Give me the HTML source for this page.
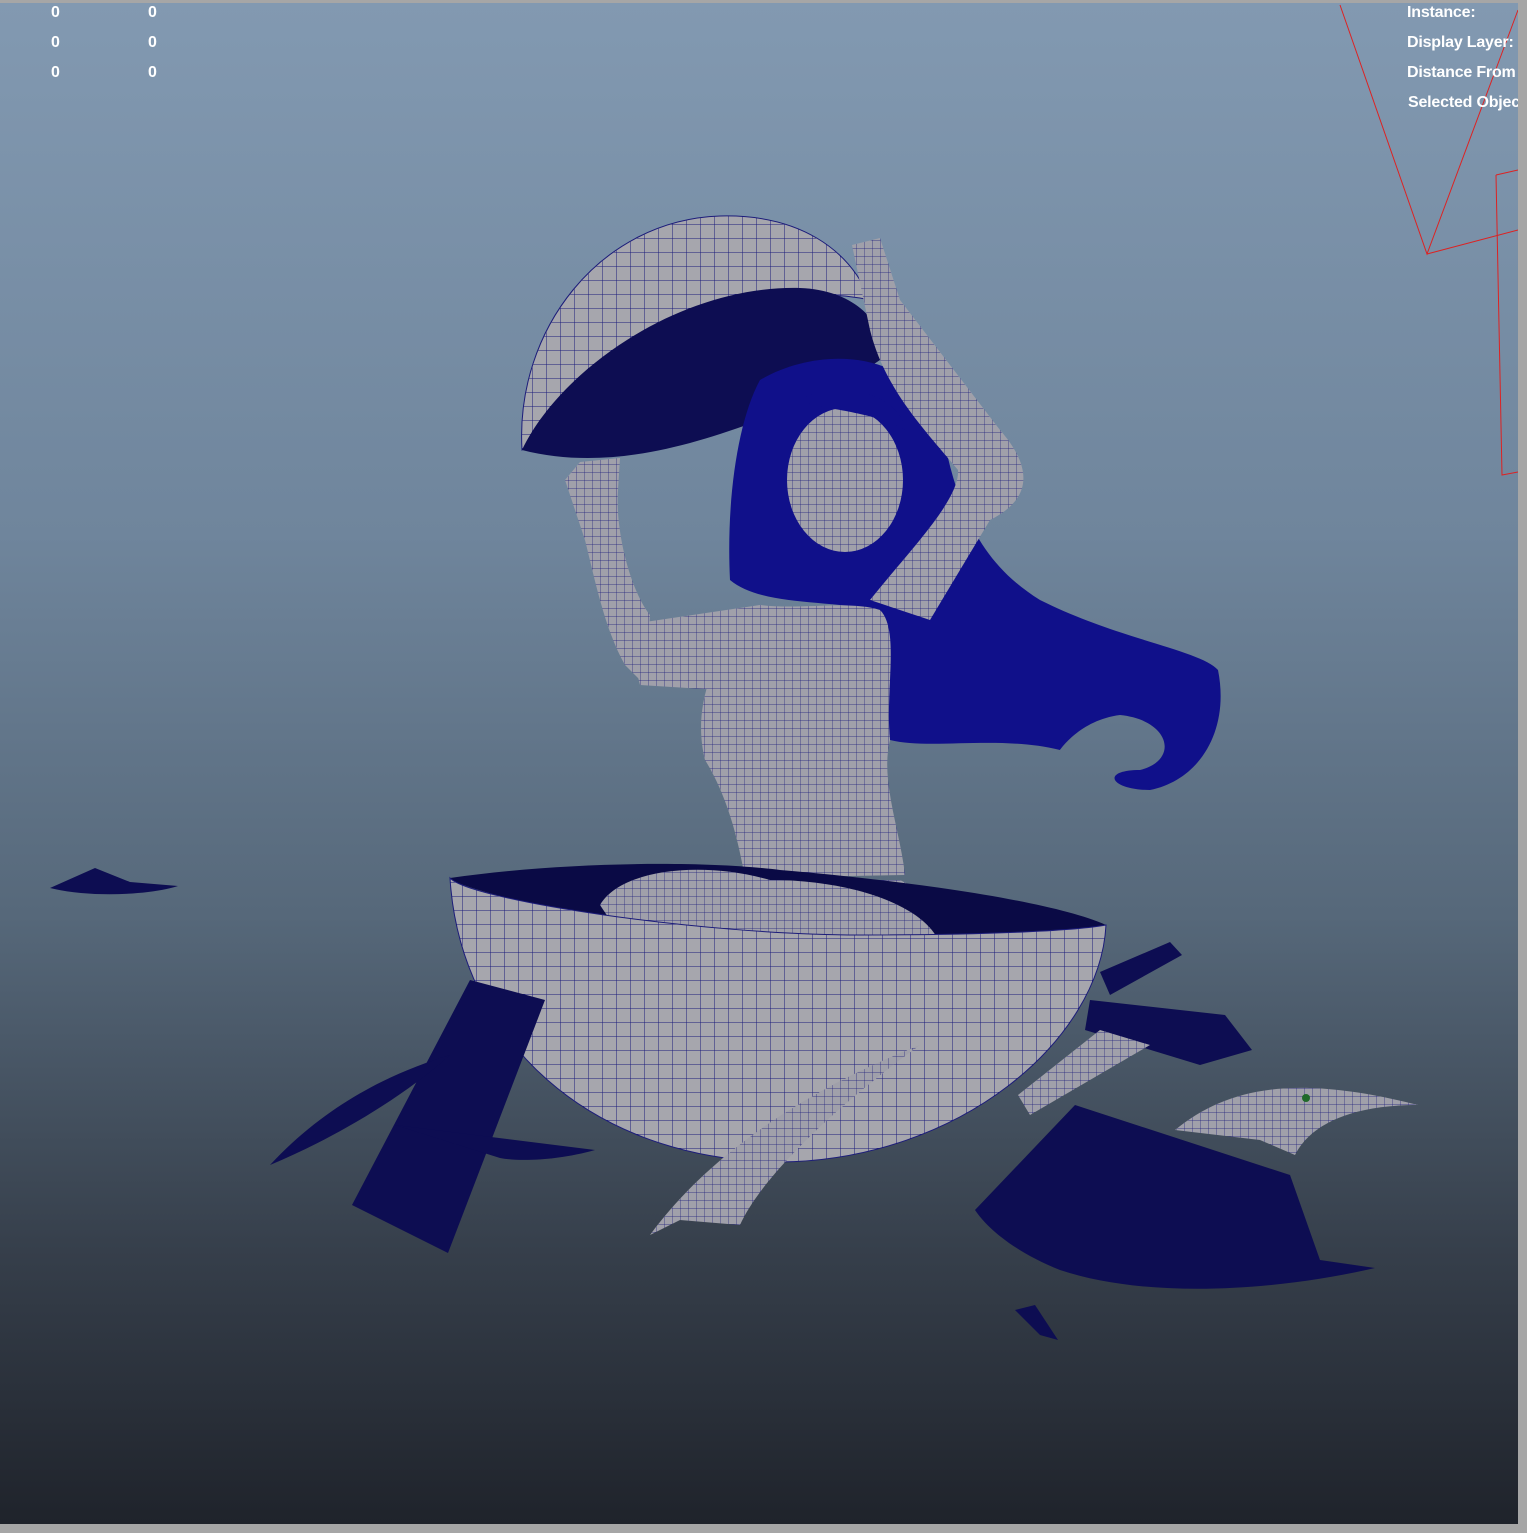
<!DOCTYPE html>
<html><head><meta charset="utf-8"><style>
html,body{margin:0;padding:0;width:1527px;height:1533px;overflow:hidden;background:#a6a6a6}
#vp{position:absolute;left:0;top:3px;width:1518px;height:1521px;overflow:hidden;background:linear-gradient(#8299b1 0%,#6f859c 35%,#56687a 60%,#363f4b 82%,#1f232b 100%)}
.t{position:absolute;color:#fff;font:bold 16px "Liberation Sans",sans-serif;white-space:nowrap;letter-spacing:-0.2px}
svg{position:absolute;left:0;top:0}
</style></head><body>
<div id="vp">
<svg width="1518" height="1521" viewBox="0 3 1518 1521">
<defs>
<pattern id="g" width="14" height="14" patternUnits="userSpaceOnUse"><rect width="14" height="14" fill="#a6a6ad"/><path d="M0 0H14M0 0V14" stroke="#1c1c7a" stroke-width="1"/></pattern>
<pattern id="gf" width="8" height="8" patternUnits="userSpaceOnUse"><rect width="8" height="8" fill="#a0a0aa"/><path d="M0 0H8M0 0V8" stroke="#1c1c7a" stroke-width="0.7"/></pattern>
</defs>
<g stroke="#d22" fill="none" stroke-width="1">
<path d="M1340 5 L1427 254 L1518 10 M1427 254 L1518 230"/>
<path d="M1496 175 L1502 475 L1518 472 M1496 175 L1518 170"/>
</g>
<!-- lid -->
<path d="M522 450 C515 330 600 220 720 216 C800 214 850 250 870 300 C780 280 650 320 580 390 C550 420 530 445 522 450Z" fill="url(#g)" stroke="#1c1c7a"/>
<path d="M522 450 C560 370 680 285 800 288 C860 290 890 330 880 360 C850 380 820 400 760 420 C680 450 600 470 522 450Z" fill="#0d0d52"/>
<!-- hair -->
<path d="M760 380 C820 345 910 350 940 420 C955 500 975 560 1040 600 C1120 640 1200 650 1218 670 C1230 730 1200 780 1150 790 C1110 790 1100 770 1140 770 C1180 760 1170 720 1120 715 C1080 720 1060 750 1060 750 C1000 735 930 750 890 740 L880 610 C820 600 760 605 730 580 C726 500 738 420 760 380Z" fill="#10108a"/>
<!-- left arm -->
<path d="M565 480 L580 462 L620 458 L618 490 C615 530 630 590 650 615 L645 685 L625 665 C605 630 595 580 585 540Z" fill="url(#gf)"/>
<!-- right arm -->
<path d="M852 245 L880 238 L900 300 L1000 430 C1035 470 1030 500 990 520 L930 620 L870 600 C910 550 960 500 958 470 C925 430 885 390 870 330Z" fill="url(#gf)"/>
<!-- face -->
<ellipse cx="845" cy="480" rx="58" ry="72" fill="url(#gf)"/>
<path d="M800 400 C830 380 900 390 905 430 C870 410 820 410 800 400Z" fill="#10108a"/>
<!-- torso -->
<path d="M760 605 C720 640 690 700 705 760 C730 800 740 850 745 878 L905 875 C900 830 880 780 890 740 C885 690 900 630 880 610 C850 600 800 610 760 605Z" fill="url(#gf)"/>
<path d="M625 625 L760 605 L720 690 L640 685Z" fill="url(#gf)"/>
<path d="M600 905 C620 870 700 860 760 880 L900 880 C940 900 950 930 940 945 L620 940Z" fill="url(#gf)"/>
<!-- bowl inside -->
<path d="M450 878 C560 862 700 860 780 870 C900 880 1050 900 1106 925 C1000 950 600 940 450 880Z" fill="#0a0a45"/>
<path d="M600 905 C620 870 700 860 770 880 C860 880 930 910 940 945 L620 935Z" fill="url(#gf)"/>
<!-- bowl -->
<path d="M450 878 C470 900 700 935 860 935 C1000 935 1080 930 1106 925 C1100 1040 960 1160 780 1162 C590 1160 460 1040 450 878Z" fill="url(#g)" stroke="#1c1c7a"/>
<g fill="#0d0d52">
<path d="M50 888 L95 868 L130 882 L178 886 C150 895 90 898 50 888Z"/>
<path d="M352 1205 L470 980 L545 1000 L448 1253Z"/>
<path d="M270 1165 C330 1100 400 1070 450 1055 C400 1100 330 1140 270 1165Z"/>
<path d="M395 1125 L595 1150 C560 1160 520 1162 500 1158Z"/>
<path d="M1100 972 L1170 942 L1182 955 L1110 995Z"/>
<path d="M1090 1000 L1225 1015 L1252 1050 L1200 1065 L1085 1030Z"/>
<path d="M975 1210 L1075 1105 L1290 1175 L1320 1260 L1375 1268 C1280 1290 1150 1300 1060 1270 C1010 1250 985 1225 975 1210Z"/>
<path d="M1015 1310 L1035 1305 L1058 1340 L1040 1335Z"/>
</g>
<path d="M1175 1130 C1230 1085 1300 1075 1418 1105 C1350 1105 1310 1125 1295 1155 L1260 1140Z" fill="url(#gf)"/>
<path d="M1018 1095 L1100 1030 L1150 1045 L1030 1115Z" fill="url(#gf)"/>
<path d="M650 1235 C720 1140 830 1080 920 1045 C830 1110 760 1180 740 1225 L680 1220Z" fill="url(#gf)"/>
<circle cx="1306" cy="1098" r="4" fill="#1f6a2a"/>
</svg>
<div class="t" style="left:51px;top:1px">0</div><div class="t" style="left:148px;top:1px">0</div>
<div class="t" style="left:51px;top:31px">0</div><div class="t" style="left:148px;top:31px">0</div>
<div class="t" style="left:51px;top:61px">0</div><div class="t" style="left:148px;top:61px">0</div>
<div class="t" style="left:1407px;top:1px">Instance:</div>
<div class="t" style="left:1407px;top:31px">Display Layer:</div>
<div class="t" style="left:1407px;top:61px">Distance From Camera:</div>
<div class="t" style="left:1408px;top:91px">Selected Objects:</div>
</div>
</body></html>
